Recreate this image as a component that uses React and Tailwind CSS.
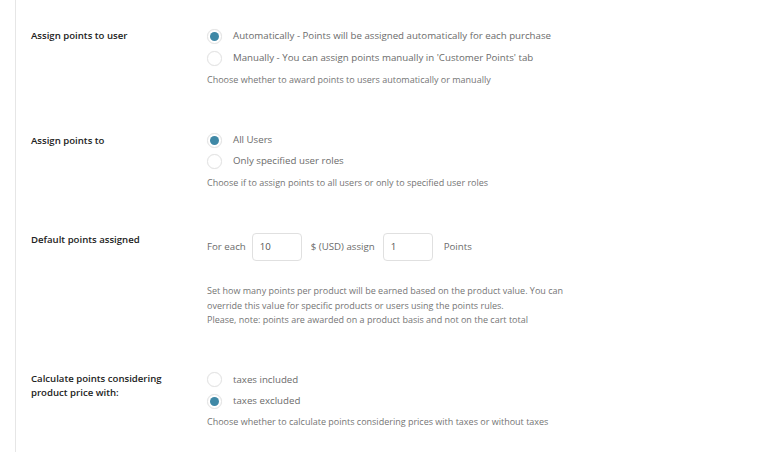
import React from "react";

function Radio({ checked, label, h = "h-[22px]" }) {
  return (
    <div className={"flex items-center " + h}>
      <span className="flex h-[15px] w-[15px] items-center justify-center rounded-full border border-[#e3e3e3] bg-white shadow-[0_0_1px_rgba(0,0,0,0.08)]">
        {checked && <span className="h-[9px] w-[9px] rounded-full bg-[#3f88a6]" />}
      </span>
      <span className="ml-[11px] text-[9.7px] text-[#6b6b6b]">{label}</span>
    </div>
  );
}

function Desc({ children, className = "" }) {
  return <div className={"text-[9px] leading-[14.5px] text-[#757575] " + className}>{children}</div>;
}

const labelCls = "w-[176px] text-[9.6px] font-semibold leading-[14px] text-[#222]";

export default function App() {
  return (
    <div className="h-[452px] w-[769px] overflow-hidden bg-white" style={{ fontFamily: '"Open Sans", sans-serif' }}>
      <div className="ml-[15px] h-full border-l border-[#e6e6e6] pl-[15px] pt-[25px]">
        {/* Row 1 */}
        <div className="flex">
          <div className={labelCls + " pt-[4px]"}>Assign points to user</div>
          <div>
            <Radio checked label="Automatically - Points will be assigned automatically for each purchase" />
            <Radio label="Manually - You can assign points manually in 'Customer Points' tab" />
            <Desc className="mt-[4px]">Choose whether to award points to users automatically or manually</Desc>
          </div>
        </div>
        {/* Row 2 */}
        <div className="mt-[42px] flex">
          <div className={labelCls + " pt-[4px]"}>Assign points to</div>
          <div>
            <Radio checked label="All Users" h="h-[21px]" />
            <Radio label="Only specified user roles" h="h-[21px]" />
            <Desc className="mt-[4px]">Choose if to assign points to all users or only to specified user roles</Desc>
          </div>
        </div>
        {/* Row 3 */}
        <div className="mt-[43px] flex">
          <div className={labelCls}>Default points assigned</div>
          <div>
            <div className="flex h-[28px] items-center text-[9.7px] text-[#6b6b6b]">
              <span>For each</span>
              <div className="ml-[6px] flex h-[28px] w-[50px] items-center rounded-[4px] border border-[#e0e0e0] pl-[7px] text-[#555]">10</div>
              <span className="ml-[9px]">$ (USD) assign</span>
              <div className="ml-[8px] flex h-[28px] w-[50px] items-center rounded-[4px] border border-[#e0e0e0] pl-[7px] text-[#555]">1</div>
              <span className="ml-[11px]">Points</span>
            </div>
            <Desc className="mt-[23px] leading-[14.7px]">
              Set how many points per product will be earned based on the product value. You can
              <br />
              override this value for specific products or users using the points rules.
              <br />
              Please, note: points are awarded on a product basis and not on the cart total
            </Desc>
          </div>
        </div>
        {/* Row 4 */}
        <div className="mt-[41px] flex">
          <div className={labelCls + " pt-[3px]"}>
            Calculate points considering
            <br />
            product price with:
          </div>
          <div>
            <Radio label="taxes included" h="h-[21.5px]" />
            <Radio checked label="taxes excluded" h="h-[21.5px]" />
            <Desc className="mt-[3px]">Choose whether to calculate points considering prices with taxes or without taxes</Desc>
          </div>
        </div>
      </div>
    </div>
  );
}
